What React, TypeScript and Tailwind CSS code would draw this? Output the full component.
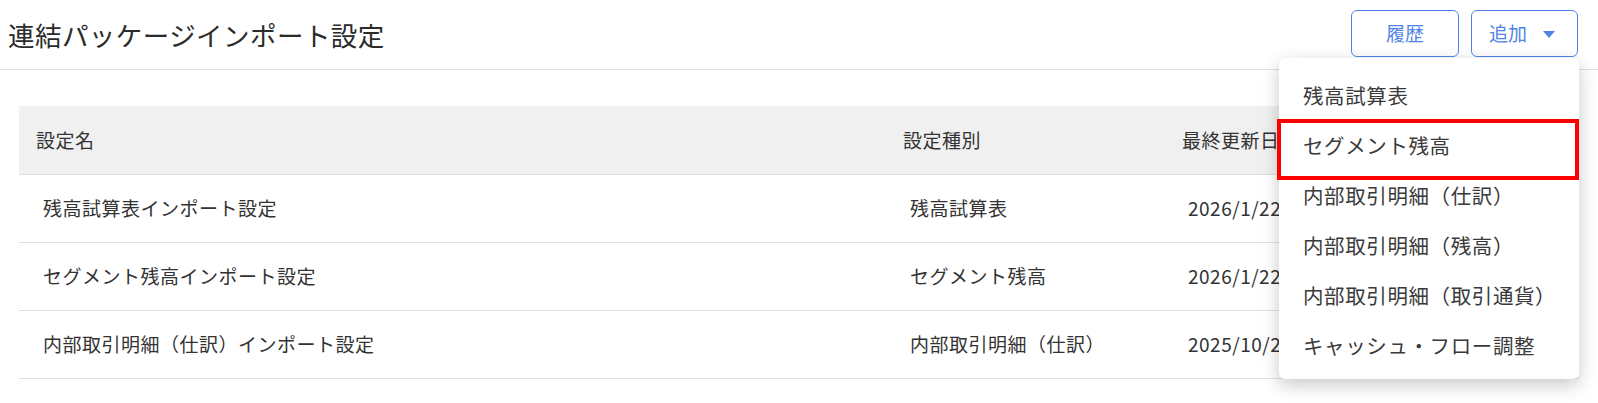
import React from "react";

const rows = [
  { name: "残高試算表インポート設定", kind: "残高試算表", date: "2026/1/22 10:12" },
  { name: "セグメント残高インポート設定", kind: "セグメント残高", date: "2026/1/22 10:10" },
  { name: "内部取引明細（仕訳）インポート設定", kind: "内部取引明細（仕訳）", date: "2025/10/21 16:40" },
];

const menuItems = [
  "残高試算表",
  "セグメント残高",
  "内部取引明細（仕訳）",
  "内部取引明細（残高）",
  "内部取引明細（取引通貨）",
  "キャッシュ・フロー調整",
];

export default function App() {
  return (
    <div
      className="relative w-[1598px] h-[403px] bg-white text-[#333] overflow-hidden"
      style={{ fontFamily: '"Noto Sans CJK JP", "Noto Sans", sans-serif' }}
    >
      <header className="flex items-center justify-between h-[70px] border-b border-[#e0e0e0] pl-[8px] pr-[20px]">
        <h1 className="text-[26.5px] font-normal leading-none tracking-[0.45px] text-[#2b2b2b] pt-[2px]">
          連結パッケージインポート設定
        </h1>
        <div className="flex items-center gap-[12px] -mt-[2px]">
          <button className="w-[108px] h-[47px] rounded-[6px] border border-[#4f84e6] text-[#4f84e6] text-[19px] bg-white flex items-center justify-center">
            履歴
          </button>
          <button className="w-[107px] h-[47px] rounded-[6px] border border-[#4f84e6] text-[#4f84e6] text-[19px] bg-white flex items-center pl-[17px] gap-[16px]">
            <span>追加</span>
            <svg width="12" height="7" viewBox="0 0 12 7" className="mt-[1px]">
              <path d="M0 0 L12 0 L6 7 Z" fill="#4f84e6" />
            </svg>
          </button>
        </div>
      </header>

      <div className="px-[19px] pt-[36px]">
        <div className="grid grid-cols-[867px_279px_1fr] h-[69px] items-center bg-[#f0f0f0] border-b border-[#dedede] text-[19px] tracking-[0.5px]">
          <div className="pl-[17px]">設定名</div>
          <div className="pl-[17px]">設定種別</div>
          <div className="pl-[17px]">最終更新日時</div>
        </div>
        {rows.map((r) => (
          <div
            key={r.name}
            className="grid grid-cols-[867px_279px_1fr] h-[68px] items-center border-b border-[#e0e0e0] text-[19px] tracking-[0.5px]"
          >
            <div className="pl-[24px]">{r.name}</div>
            <div className="pl-[24px]">{r.kind}</div>
            <div className="pl-[23px]">{r.date}</div>
          </div>
        ))}
      </div>

      <div className="absolute left-[1279px] top-[58px] w-[300px] h-[321px] bg-white rounded-[6px] shadow-[0_6px_18px_rgba(0,0,0,0.22)] pt-[12px]">
        {menuItems.map((m) => (
          <div key={m} className="h-[50px] flex items-center pl-[24px] text-[20.5px] tracking-[0.6px] text-[#3a3a3a]">
            {m}
          </div>
        ))}
      </div>

      <div className="absolute left-[1277px] top-[119px] w-[302px] h-[61px] border-[4px] border-[#ff0000] pointer-events-none" />
    </div>
  );
}
